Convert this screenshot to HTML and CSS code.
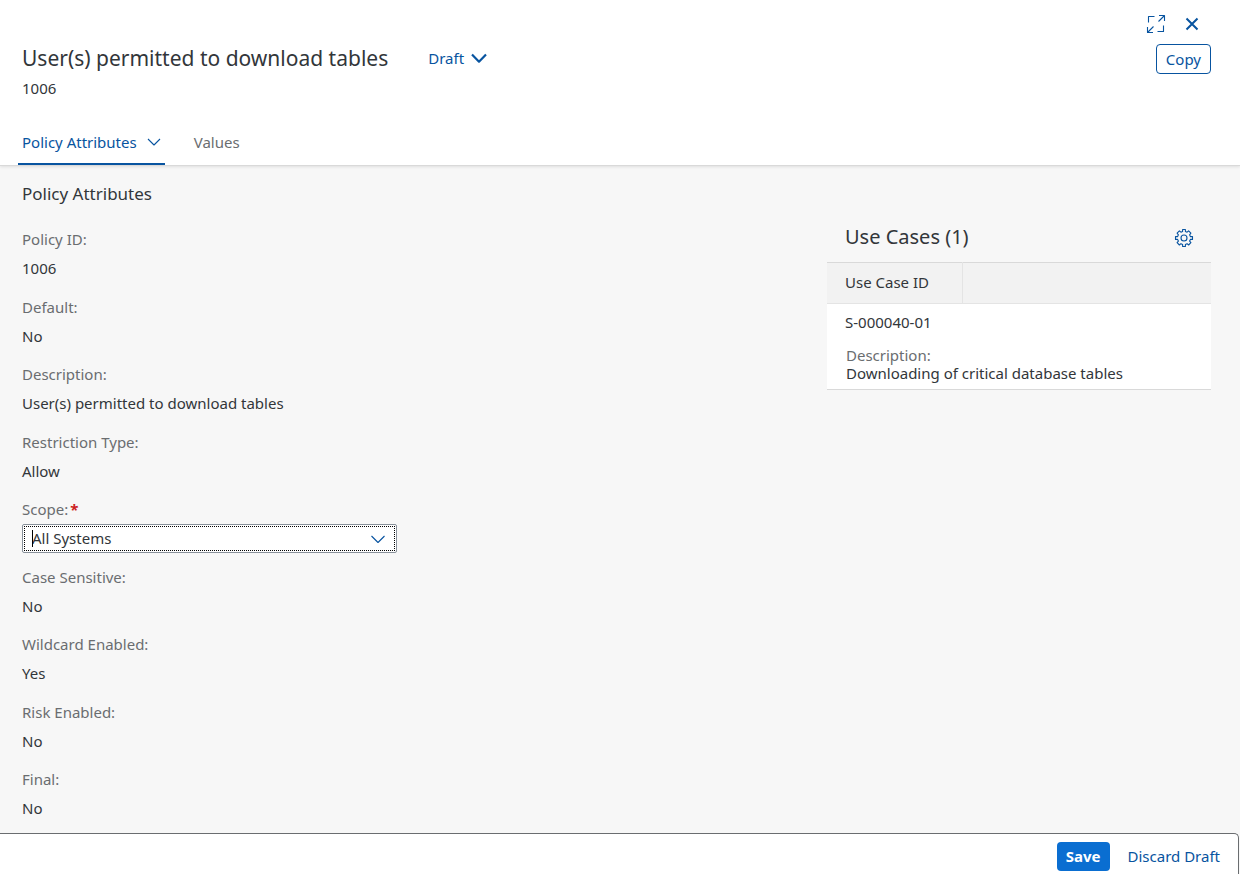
FILE: index.html
```html
<!DOCTYPE html>
<html lang="en">
<head>
<meta charset="utf-8">
<title>User(s) permitted to download tables</title>
<link rel="stylesheet" href="styles.css">
</head>
<body>
<div class="page">
  <header class="header">
    <div class="title-area">
      <div class="title-row">
        <h1 class="title">User(s) permitted to download tables</h1>
        <button class="draft" type="button">Draft
          <svg class="draft-icon" viewBox="0 0 18 12" width="18" height="12" aria-hidden="true"><path d="M2 2.500l7 7.200L16 2.500"/></svg>
        </button>
      </div>
      <p class="subtitle">1006</p>
    </div>
    <div class="actions">
      <div class="window-actions">
        <button class="icon-button" type="button" aria-label="Full screen">
          <svg class="thin-icon" viewBox="0 0 20 20" width="20" height="20" aria-hidden="true"><path d="M8.500 2.500H2.500V8.500M11.500 17.500H17.500V11.500M12.500 7.500L18.500 1.500M13 1.500H18.500V7M7.500 12.500L1.500 18.500M1.500 13V18.500H7"/></svg>
        </button>
        <button class="icon-button" type="button" aria-label="Close">
          <svg class="close-icon" viewBox="0 0 14 14" width="14" height="14" aria-hidden="true"><path d="M1.500 1.500l11 11M12.500 1.500l-11 11"/></svg>
        </button>
      </div>
      <button class="copy" type="button">Copy</button>
    </div>
    <nav class="tabs">
      <a class="tab tab-active" href="#attributes">Policy Attributes
        <svg class="thin-icon" viewBox="0 0 14 8" width="14" height="8" aria-hidden="true"><path d="M1 1l6 6 6-6"/></svg>
      </a>
      <a class="tab" href="#values">Values</a>
    </nav>
  </header>

  <main class="content" id="attributes">
    <section class="attributes">
      <h2 class="section-title">Policy Attributes</h2>
      <div class="fields">
        <div class="field"><span class="label">Policy ID:</span><span class="value">1006</span></div>
        <div class="field"><span class="label">Default:</span><span class="value">No</span></div>
        <div class="field"><span class="label">Description:</span><span class="value">User(s) permitted to download tables</span></div>
        <div class="field"><span class="label">Restriction Type:</span><span class="value">Allow</span></div>
        <div class="field">
          <label class="label" for="scope">Scope:<span class="required">*</span></label>
          <div class="combo">
            <input class="combo-input" id="scope" type="text" value="All Systems" required>
            <span class="caret"></span>
            <button class="combo-button" type="button" aria-label="Show options">
              <svg class="thin-icon" viewBox="0 0 16 8" width="16" height="8" aria-hidden="true"><path d="M1.500 1l6.500 6.500 6.500-6.500"/></svg>
            </button>
          </div>
        </div>
        <div class="field"><span class="label">Case Sensitive:</span><span class="value">No</span></div>
        <div class="field"><span class="label">Wildcard Enabled:</span><span class="value">Yes</span></div>
        <div class="field"><span class="label">Risk Enabled:</span><span class="value">No</span></div>
        <div class="field"><span class="label">Final:</span><span class="value">No</span></div>
      </div>
    </section>

    <section class="cases">
      <div class="cases-bar">
        <h2 class="cases-title">Use Cases (1)</h2>
        <button class="icon-button" type="button" aria-label="Settings">
          <svg class="thin-icon" viewBox="0 0 20 20" width="20" height="20" aria-hidden="true"><path d="M8.600 1.500h2.800v2l1.700.7 1.500-1.300 2.300 2.300-1.300 1.600.8 1.800h2.100v2.800h-2.100l-.8 1.700 1.300 1.600-2.300 2.300-1.500-1.300-1.700.8v2h-2.800v-2l-1.700-.8-1.500 1.300-2.300-2.300 1.300-1.600-.8-1.700h-2.100v-2.800h2.100l.8-1.800-1.300-1.600 2.300-2.300 1.500 1.300 1.700-.7z"/><circle cx="10" cy="10" r="3"/></svg>
        </button>
      </div>
      <table class="cases-table">
        <thead><tr><th class="cell-id" scope="col">Use Case ID</th><th></th></tr></thead>
        <tbody>
          <tr><td class="cell-case" colspan="2">S-000040-01</td></tr>
          <tr><td class="cell-description" colspan="2"><div class="muted">Description:</div><div>Downloading of critical database tables</div></td></tr>
        </tbody>
      </table>
    </section>
  </main>

  <footer class="footer">
    <button class="save" type="button">Save</button>
    <button class="discard" type="button">Discard Draft</button>
  </footer>
</div>
</body>
</html>
```
FILE: styles.css
```css
* { box-sizing: border-box; }

body {
  margin: 0;
  background: #f7f7f7;
  color: #32363a;
  font-family: "Noto Sans", "Open Sans", sans-serif;
  font-size: 15px;
  line-height: 20px;
}

h1, h2, p { margin: 0; font-weight: 400; }

button, input { font: inherit; color: inherit; }

button {
  padding: 0;
  border: 0;
  background: none;
  color: #0854a0;
  cursor: pointer;
}

svg { display: block; fill: none; stroke: #0854a0; stroke-linejoin: round; }

.page {
  display: flex;
  flex-direction: column;
  min-height: 100vh;
}

.header {
  display: grid;
  grid-template-columns: 1fr auto;
  padding: 12px 29px 0 22px;
  background: #fff;
  border-bottom: 1px solid #d9d9d9;
  box-shadow: 0 1px 3px rgba(0, 0, 0, .1);
}

.title-area { padding-top: 31px; }

.title-row { display: flex; align-items: center; gap: 40px; }

.title { font-size: 21px; line-height: 30px; }

.subtitle { padding-top: 4px; line-height: 22px; }

.draft { display: flex; align-items: center; gap: 6px; }

.draft-icon { stroke-width: 2.2; }

.actions {
  display: flex;
  flex-direction: column;
  align-items: flex-end;
  gap: 8px;
}

.window-actions { display: flex; gap: 12px; padding-right: 7px; }

.icon-button {
  display: flex;
  align-items: center;
  justify-content: center;
  width: 24px;
  height: 24px;
}

.thin-icon { stroke-width: 1.1; }

.close-icon { stroke-width: 2; }

.copy {
  height: 30px;
  padding: 0 9px;
  border: 1px solid #0854a0;
  border-radius: 4px;
}

.tabs {
  grid-column: 1 / -1;
  display: flex;
  gap: 25px;
  margin-left: -4px;
  padding-top: 21px;
}

.tab {
  display: flex;
  align-items: center;
  gap: 10px;
  height: 45px;
  padding: 0 4px;
  border-bottom: 2px solid transparent;
  color: #6a6d70;
  text-decoration: none;
}

.tab-active { border-color: #0854a0; color: #0854a0; }

.content {
  flex: 1;
  display: flex;
  justify-content: space-between;
  gap: 40px;
  padding: 16px 29px 10px 22px;
}

.attributes {
  display: flex;
  flex-direction: column;
  gap: 19px;
  width: 375px;
}

.section-title { font-size: 17px; line-height: 24px; }

.fields {
  flex: 1;
  display: flex;
  flex-direction: column;
  justify-content: space-between;
  gap: 8px;
}

.label, .value { display: block; line-height: 29px; }

.label, .muted { color: #6a6d70; }

.required { padding-left: 2px; color: #c22; font-weight: 700; }

.combo {
  position: relative;
  display: flex;
  height: 29px;
  border: 1px solid #89919a;
  border-radius: 2px;
  background: #fff;
}

.combo::after {
  content: "";
  position: absolute;
  inset: 1px;
  border: 1px dotted #000;
  pointer-events: none;
}

.combo-input {
  flex: 1;
  min-width: 0;
  padding: 0 9px 2px;
  border: 0;
  background: none;
  outline: none;
}

.caret {
  position: absolute;
  top: 5px;
  left: 9px;
  width: 1px;
  height: 17px;
  background: #000;
}

.combo-button {
  display: flex;
  align-items: center;
  justify-content: center;
  width: 36px;
}

.cases { width: 384px; padding-top: 41px; }

.cases-bar {
  display: flex;
  align-items: center;
  justify-content: space-between;
  height: 39px;
  padding: 0 15px 10px 18px;
}

.cases-title { padding-bottom: 2px; font-size: 20px; line-height: 28px; }

.cases-table {
  width: 100%;
  border-collapse: collapse;
  border-top: 1px solid #d9d9d9;
  border-bottom: 1px solid #d9d9d9;
  background: #fff;
}

.cases-table th {
  height: 41px;
  padding: 0 18px 2px;
  border-bottom: 1px solid #e4e4e4;
  background: #f2f2f2;
  font-weight: 400;
  text-align: left;
}

.cases-table .cell-id { width: 135px; border-right: 1px solid #e4e4e4; }

.cell-case { height: 38px; padding: 0 18px 2px; }

.cell-description { padding: 4px 19px 7px; line-height: 18px; }

.footer {
  display: flex;
  justify-content: flex-end;
  gap: 10px;
  height: 41px;
  padding: 8px 10px 0 22px;
  margin-right: 1px;
  border-top: 1px solid #6a6d70;
  border-right: 1px solid #6a6d70;
  border-top-right-radius: 5px;
  background: #fff;
}

.save, .discard { height: 29px; padding: 0 8px 2px; border-radius: 4px; }

.save { padding: 0 9px 2px; background: #0a6ed1; color: #fff; font-weight: 700; }
```
